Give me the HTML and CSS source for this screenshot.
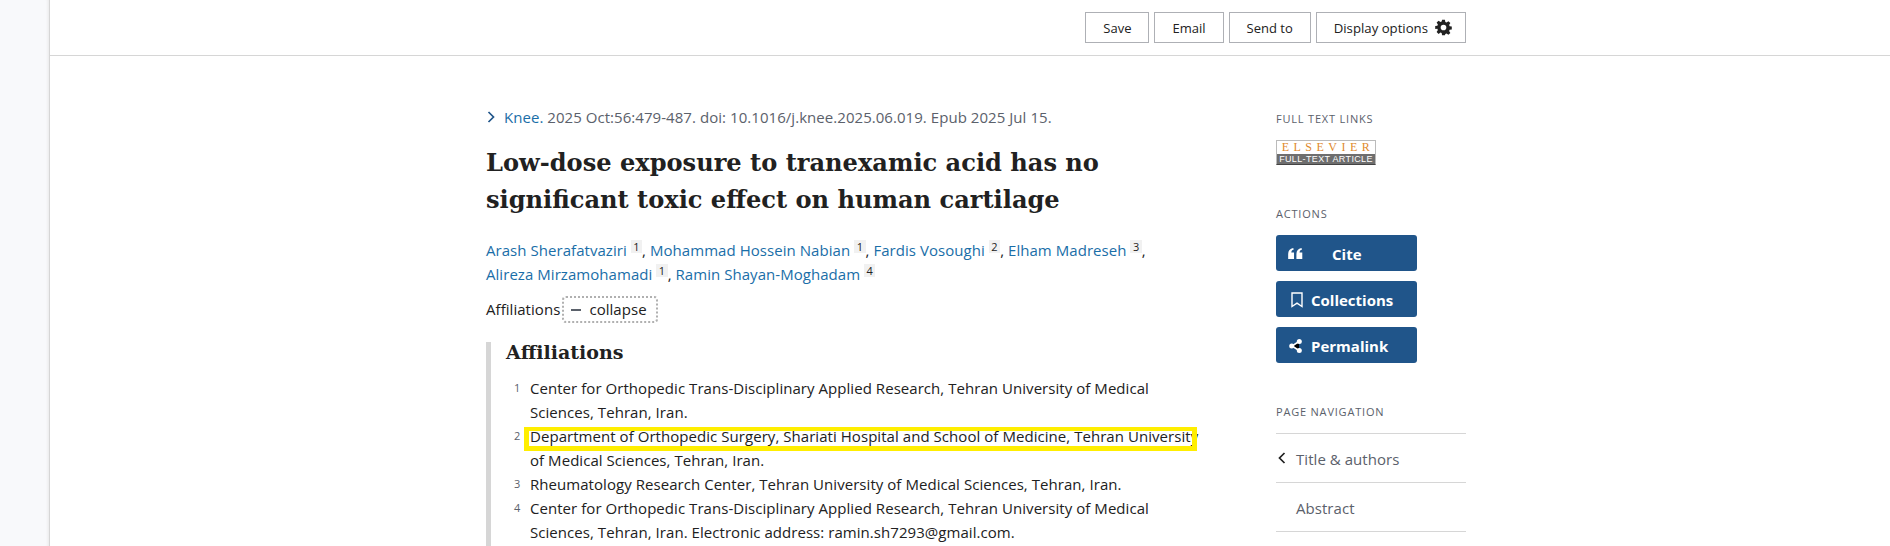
FILE: index.html
```html
<!DOCTYPE html>
<html lang="en">
<head>
  <meta charset="UTF-8" />
  <title>Low-dose exposure to tranexamic acid</title>
  <link rel="stylesheet" href="styles.css">
</head>
<body>
  <div class="rail"></div>
  <div class="main">
    <div class="toolbar">
      <button class="tool">Save</button>
      <button class="tool">Email</button>
      <button class="tool">Send to</button>
      <button class="tool tool-display">Display options
        <svg class="gear" viewBox="0 0 24 24" width="17" height="17"><path fill="#212121" fill-rule="evenodd" d="M10 1h4l.6 3.1c.6.2 1.200.4 1.700.7l2.600-1.800 2.800 2.800-1.800 2.600c.3.500.6 1.100.7 1.700l3.100.6v4l-3.100.6c-.2.600-.4 1.200-.7 1.700l1.800 2.600-2.800 2.800-2.600-1.800c-.5.300-1.100.6-1.700.7L14 23h-4l-.6-3.100c-.6-.2-1.200-.4-1.700-.7l-2.600 1.800-2.800-2.800 1.800-2.600c-.3-.5-.6-1.100-.7-1.700L.3 14v-4l3.100-.6c.2-.6.4-1.200.7-1.700L2.300 5.100l2.800-2.800 2.600 1.800c.5-.3 1.100-.6 1.700-.7zM12 8a4 4 0 1 0 0 8 4 4 0 0 0 0-8z"/></svg>
      </button>
    </div>

    <div class="content">
      <div class="article">
        <div class="cite-line">
          <svg class="chev" viewBox="0 0 8 12" width="8" height="12"><path d="M1.500 1l5 5-5 5" fill="none" stroke="#20558a" stroke-width="1.700"/></svg>
          <a class="link" href="#">Knee.</a> 2025 Oct:56:479-487. doi: 10.1016/j.knee.2025.06.019. Epub 2025 Jul 15.
        </div>
        <h1>Low-dose exposure to tranexamic acid has no<br>significant toxic effect on human cartilage</h1>
        <div class="authors">
          <a class="link" href="#">Arash Sherafatvaziri</a> <sup>1</sup>, <a class="link" href="#">Mohammad Hossein Nabian</a> <sup>1</sup>, <a class="link" href="#">Fardis Vosoughi</a> <sup>2</sup>, <a class="link" href="#">Elham Madreseh</a> <sup>3</sup>,<br>
          <a class="link" href="#">Alireza Mirzamohamadi</a> <sup>1</sup>, <a class="link" href="#">Ramin Shayan-Moghadam</a> <sup>4</sup>
        </div>
        <div class="aff-toggle">Affiliations <span class="collapse"><i class="minus"></i>collapse</span></div>
        <div class="aff-box">
          <h3>Affiliations</h3>
          <ul class="aff-list">
            <li><span class="num">1</span><span>Center for Orthopedic Trans-Disciplinary Applied Research, Tehran University of Medical Sciences, Tehran, Iran.</span></li>
            <li><span class="num">2</span><span>Department of Orthopedic Surgery, Shariati Hospital and School of Medicine, Tehran University of Medical Sciences, Tehran, Iran.</span><div class="mark"></div></li>
            <li><span class="num">3</span><span>Rheumatology Research Center, Tehran University of Medical Sciences, Tehran, Iran.</span></li>
            <li><span class="num">4</span><span>Center for Orthopedic Trans-Disciplinary Applied Research, Tehran University of Medical Sciences, Tehran, Iran. Electronic address: ramin.sh7293@gmail.com.</span></li>
          </ul>
        </div>
      </div>

      <div class="side">
        <div class="side-title first">FULL TEXT LINKS</div>
        <div class="elsevier">
          <div class="els-top">ELSEVIER</div>
          <div class="els-bot">FULL-TEXT ARTICLE</div>
        </div>
        <div class="side-title actions">ACTIONS</div>
        <button class="act act-cite">
          <svg viewBox="0 0 16 12" width="15" height="11"><path fill="#fff" d="M0 12V6.500C0 3 2 .8 5.500 0l.6 1.600C4.400 2.200 3.500 3.200 3.400 4.800h3V12zM9 12V6.500C9 3 11 .8 14.500 0l.6 1.600c-1.700.6-2.600 1.600-2.700 3.200h3V12z"/></svg>
          <span>Cite</span>
        </button>
        <button class="act">
          <svg class="ic-book" viewBox="0 0 12 16" width="12" height="16"><path fill="none" stroke="#fff" stroke-width="1.400" d="M1 1h10v13.500l-5-3.300-5 3.300z"/></svg>
          <span>Collections</span>
        </button>
        <button class="act">
          <svg class="ic-share" viewBox="0 0 13 14" width="13" height="14"><path stroke="#fff" stroke-width="1.500" d="M10 2.500L3 7l7 4.500"/><circle fill="#fff" cx="10.300" cy="2.600" r="2.500"/><circle fill="#fff" cx="2.700" cy="7" r="2.500"/><circle fill="#fff" cx="10.300" cy="11.400" r="2.500"/></svg>
          <span>Permalink</span>
        </button>
        <div class="side-title nav-title">PAGE NAVIGATION</div>
        <ul class="page-nav">
          <li><svg class="chev-l" viewBox="0 0 8 12" width="8" height="12"><path d="M6.500 1l-5 5 5 5" fill="none" stroke="#212121" stroke-width="1.700"/></svg>Title &amp; authors</li>
          <li>Abstract</li>
        </ul>
      </div>
    </div>
  </div>
</body>
</html>
```

FILE: styles.css
```css
html, body { margin: 0; padding: 0; height: 546px; overflow: hidden; }
body { display: flex; font-family: "Open Sans", Arial, sans-serif; font-size: 15px; letter-spacing: .05px; color: #212121; background: #fff; }

.rail { width: 49px; flex: none; background: #f8f9fb; border-right: 1px solid #d6d6d6; box-shadow: inset -3px 0 3px -2px #e8e8e8; }
.main { flex: 1; min-width: 0; }

.toolbar { height: 56px; border-bottom: 1px solid #d6d6d6; display: flex; justify-content: flex-end; gap: 5px; padding: 12px 424px 0 0; box-sizing: border-box; }
.tool { height: 31px; padding: 0 17px; background: #fff; border: 1px solid #aeb0b5; font-family: inherit; font-size: 13px; color: #212121; display: flex; align-items: center; }
.tool-display { gap: 7px; padding-right: 13px; font-size: 13.200px; }

.content { display: flex; padding: 0 0 0 436px; }
.article { width: 720px; flex: none; }
.side { width: 190px; margin-left: 70px; flex: none; }

.link { color: #1a6ea8; text-decoration: none; }
.cite-line { margin-top: 50px; height: 22px; line-height: 22px; color: #5b616b; white-space: nowrap; }
.chev { margin: 0 5px 0 1px; }
h1 { margin: 16px 0 0; font-family: "DejaVu Serif", serif; font-size: 24.100px; line-height: 37px; font-weight: 700; color: #212121; letter-spacing: 0; }
.authors { margin-top: 20px; line-height: 24px; }
sup { display: inline-block; background: #f1f1f1; font-size: 11px; line-height: 13px; padding: 0 2.500px; vertical-align: 5px; color: #212121; }
.aff-toggle { margin-top: 10px; height: 27px; line-height: 27px; display: flex; gap: 2px; }
.collapse { border: 2px dotted #b0b0b0; border-radius: 4px; padding: 0 7px; box-sizing: border-box; width: 96px; display: flex; align-items: center; white-space: nowrap; }
.minus { display: inline-block; width: 10px; height: 2px; background: #5b616b; margin-right: 8px; flex: none; }

.aff-box { margin-top: 19px; border-left: 5px solid #d6d6d6; padding-left: 15px; height: 204px; box-sizing: border-box; }
h3 { margin: 0; font-family: "DejaVu Serif", serif; font-size: 19px; line-height: 20px; font-weight: 700; color: #212121; letter-spacing: 0; }
.aff-list { list-style: none; margin: 14px 0 0; padding: 0; width: 697px; }
.aff-list li { display: flex; line-height: 24px; position: relative; }
.num { width: 24px; flex: none; padding-left: 8px; box-sizing: border-box; font-size: 11px; color: #5b616b; }
.mark { position: absolute; left: 18px; top: 3px; width: 673px; height: 24px; box-sizing: border-box; border: 5px solid #ffee00; border-top-width: 4px; }

.side-title { font-size: 11px; line-height: 14px; letter-spacing: .8px; color: #5b616b; }
.first { margin-top: 56px; }
.elsevier { margin-top: 14px; width: 100px; height: 25px; border: 1px solid #bbb; border-bottom-color: #444; box-sizing: border-box; text-align: center; background: #fff; letter-spacing: 0; }
.els-top { height: 13px; font-family: "Liberation Serif", serif; font-size: 12px; line-height: 13px; letter-spacing: 4.500px; padding-left: 4px; color: #e08a2c; white-space: nowrap; }
.els-bot { height: 10px; font-family: "Liberation Sans", sans-serif; font-size: 9px; line-height: 10px; letter-spacing: .35px; color: #fff; background: #6e6e6e; white-space: nowrap; }
.actions { margin-top: 42px; }
.act { display: flex; align-items: center; width: 141px; height: 36px; margin-top: 10px; padding: 1px 0 0 12px; box-sizing: border-box; background: #20558a; border: 0; border-radius: 3px; font-family: inherit; font-size: 15px; font-weight: 700; color: #fff; }
.actions + .act { margin-top: 14px; }
.act span { margin-left: 8px; }
.act-cite span { margin-left: 29px; }
.ic-book { margin-left: 3px; }
.ic-share { margin-left: 1px; margin-right: 1px; }
.nav-title { margin-top: 42px; }
.page-nav { list-style: none; margin: 14px 0 0; padding: 0; border-top: 1px solid #d6d6d6; color: #5b616b; }
.page-nav li { height: 49px; line-height: 51px; box-sizing: border-box; border-bottom: 1px solid #d6d6d6; padding-left: 20px; position: relative; }
.chev-l { position: absolute; left: 2px; top: 18px; }
```
